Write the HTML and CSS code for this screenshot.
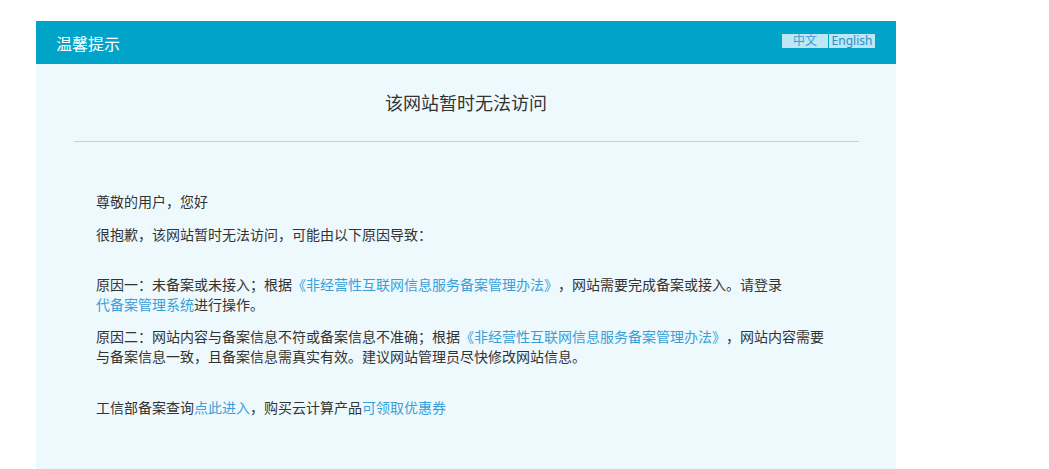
FILE: index.html
```html
<!DOCTYPE html>
<html lang="zh-CN">
<head>
    <meta charset="UTF-8">
    <title>温馨提示</title>
    <link rel="stylesheet" href="styles.css">
</head>
<body>
    <div class="box">
        <div class="header">
            <span class="header-title">温馨提示</span>
            <div class="lang">
                <a href="#" class="lang-zh">中文</a>
                <a href="#" class="lang-en">English</a>
            </div>
        </div>

        <h1 class="title">该网站暂时无法访问</h1>
        <div class="line"></div>

        <div class="content">
            <p class="greet">尊敬的用户，您好</p>
            <p class="lead">很抱歉，该网站暂时无法访问，可能由以下原因导致：</p>
            <p class="reason">原因一：未备案或未接入；根据<a href="#">《非经营性互联网信息服务备案管理办法》</a>，网站需要完成备案或接入。请登录<br><a href="#">代备案管理系统</a>进行操作。</p>
            <p class="reason">原因二：网站内容与备案信息不符或备案信息不准确；根据<a href="#">《非经营性互联网信息服务备案管理办法》</a>，网站内容需要与备案信息一致，且备案信息需真实有效。建议网站管理员尽快修改网站信息。</p>
            <p class="foot">工信部备案查询<a href="#">点此进入</a>，购买云计算产品<a href="#">可领取优惠券</a></p>
        </div>
    </div>
</body>
</html>
```

FILE: styles.css
```css
body {
    margin: 0;
    background: #fff;
    font-family: "Noto Sans", "Noto Sans CJK SC", sans-serif;
    color: #333;
    text-spacing-trim: space-all;
}

.box {
    width: 860px;
    height: 448px;
    margin: 21px 0 0 36px;
    background: #eef9fe;
}

.header {
    height: 43px;
    padding: 0 21px 0 20px;
    background: #00a4c9;
    display: flex;
    justify-content: space-between;
    align-items: center;
}

.header-title {
    color: #fff;
    font-size: 16px;
}

.lang {
    display: flex;
    gap: 1px;
    margin-bottom: 3px;
}

.lang a {
    display: block;
    width: 46px;
    height: 14px;
    line-height: 14px;
    font-size: 12px;
    text-align: center;
    text-decoration: none;
    background: #bde7f4;
    color: #3a9dd3;
}

.lang .lang-en {
    color: #2c8ec8;
}

.title {
    margin: 27px 0 0;
    font-size: 18px;
    font-weight: normal;
    line-height: 24px;
    text-align: center;
    color: #333;
}

.line {
    height: 1px;
    margin: 26px 37px 0 38px;
    background: #a9dbe9;
}

.content {
    padding: 50px 65px 0 60px;
    font-size: 14px;
    line-height: 20px;
}

.content p {
    margin: 0;
}

.content a {
    color: #3a9fd6;
    text-decoration: none;
}

.lead {
    margin-top: 13px !important;
}

.reason {
    margin-top: 30px !important;
}

.reason + .reason {
    margin-top: 12px !important;
}

.foot {
    margin-top: 31px !important;
}
```
